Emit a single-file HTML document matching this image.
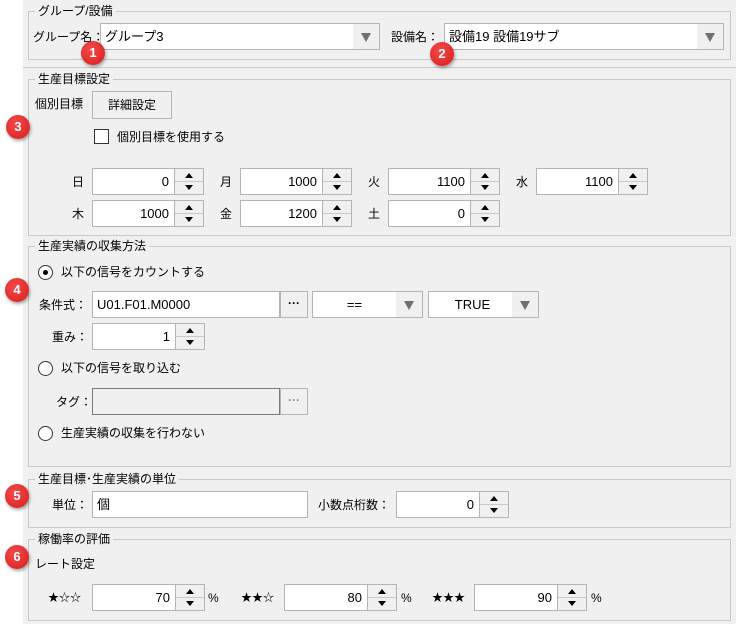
<!DOCTYPE html>
<html><head><meta charset="utf-8"><style>
*{box-sizing:border-box;margin:0;padding:0}
body{width:736px;height:624px;background:#fff;position:relative;overflow:hidden;font-family:"Liberation Sans","Noto Sans CJK JP",sans-serif;font-size:12px;color:#000}
.panel{position:absolute;left:23px;top:0;width:713px;height:624px;background:#f0f0f0}
.a{position:absolute}
.gb{position:absolute;border:1px solid #c8c8c8;left:28px;width:703px}
.gt{position:absolute;left:6px;top:-9px;background:#f0f0f0;padding:0 3px;font-size:12px;line-height:16px}
.tb{position:absolute;background:#fff;border:1px solid #b4b4b4;height:27px;line-height:25px;padding:0 4px;font-size:13px}
.num{text-align:right;padding-right:5px}
.spb{position:absolute;border:1px solid #b4b4b4;border-left:none;width:29px;height:27px;background:#f0f0f0}
.spb:after{content:"";position:absolute;left:0;right:0;top:12px;border-top:1px solid #c8c8c8}
.up,.dn{position:absolute;left:10px;width:0;height:0;border-left:4px solid transparent;border-right:4px solid transparent}
.up{top:4px;border-bottom:5px solid #000}
.dn{top:16px;border-top:5px solid #000}
.cb{position:absolute;background:#fff;border:1px solid #b4b4b4;height:27px;line-height:25px;padding-left:4px;font-size:13px}
.cb .ar{position:absolute;right:0;top:0;width:26px;height:25px;background:#f0f0f0}
.cb .ar:after{content:"";position:absolute;left:8px;top:9px;border-left:5px solid transparent;border-right:5px solid transparent;border-top:9px solid #707070}
.btn{position:absolute;border:1px solid #b4b4b4;background:#f0f0f0;text-align:center}
.badge{position:absolute;width:24px;height:24px;border-radius:50%;background:radial-gradient(circle at 40% 35%,#f24a4a,#d91c1c);color:#fff;font-weight:bold;font-size:13px;text-align:center;line-height:24px;box-shadow:1px 2px 3px rgba(0,0,0,.35)}
.rad{position:absolute;width:15px;height:15px;border:1px solid #333;border-radius:50%;background:#fff}
.l{position:absolute;line-height:16px}
</style></head><body>
<div class="panel"></div>
<div class="a" style="left:23px;top:67px;width:713px;border-top:1px solid #c8c8c8"></div>

<div class="gb" style="top:11px;height:49px"><div class="gt">グループ/設備</div></div>
<div class="l" style="left:33px;top:29px">グループ名：</div>
<div class="cb" style="left:100px;top:23px;width:280px">グループ3<div class="ar"></div></div>
<div class="l" style="left:391px;top:29px">設備名：</div>
<div class="cb" style="left:444px;top:23px;width:280px">設備19 設備19サブ<div class="ar"></div></div>

<div class="gb" style="top:79px;height:157px"><div class="gt">生産目標設定</div></div>
<div class="l" style="left:35px;top:96px">個別目標</div>
<div class="btn" style="left:92px;top:91px;width:80px;height:28px;line-height:26px">詳細設定</div>
<div class="a" style="left:94px;top:129px;width:15px;height:15px;border:1px solid #333;background:#fff"></div>
<div class="l" style="left:117px;top:129px">個別目標を使用する</div>

<div class="l" style="left:72px;top:174px">日</div>
<div class="tb num" style="left:92px;top:168px;width:83px">0</div><div class="spb" style="left:175px;top:168px"><i class="up"></i><i class="dn"></i></div>
<div class="l" style="left:220px;top:174px">月</div>
<div class="tb num" style="left:240px;top:168px;width:83px">1000</div><div class="spb" style="left:323px;top:168px"><i class="up"></i><i class="dn"></i></div>
<div class="l" style="left:368px;top:174px">火</div>
<div class="tb num" style="left:388px;top:168px;width:83px">1100</div><div class="spb" style="left:471px;top:168px"><i class="up"></i><i class="dn"></i></div>
<div class="l" style="left:516px;top:174px">水</div>
<div class="tb num" style="left:536px;top:168px;width:83px">1100</div><div class="spb" style="left:619px;top:168px"><i class="up"></i><i class="dn"></i></div>
<div class="l" style="left:72px;top:206px">木</div>
<div class="tb num" style="left:92px;top:200px;width:83px">1000</div><div class="spb" style="left:175px;top:200px"><i class="up"></i><i class="dn"></i></div>
<div class="l" style="left:220px;top:206px">金</div>
<div class="tb num" style="left:240px;top:200px;width:83px">1200</div><div class="spb" style="left:323px;top:200px"><i class="up"></i><i class="dn"></i></div>
<div class="l" style="left:368px;top:206px">土</div>
<div class="tb num" style="left:388px;top:200px;width:83px">0</div><div class="spb" style="left:471px;top:200px"><i class="up"></i><i class="dn"></i></div>

<div class="gb" style="top:246px;height:221px"><div class="gt">生産実績の収集方法</div></div>
<div class="rad" style="left:38px;top:265px"><div style="position:absolute;left:4px;top:4px;width:5px;height:5px;border-radius:50%;background:#000"></div></div>
<div class="l" style="left:61px;top:264px">以下の信号をカウントする</div>
<div class="l" style="left:39px;top:297px">条件式：</div>
<div class="tb" style="left:92px;top:291px;width:188px">U01.F01.M0000</div>
<div class="btn" style="left:280px;top:291px;width:28px;height:27px;line-height:22px;font-weight:bold">···</div>
<div class="cb" style="left:312px;top:291px;width:111px;text-align:center;padding-right:30px">==<div class="ar"></div></div>
<div class="cb" style="left:428px;top:291px;width:111px;text-align:center;padding-right:26px">TRUE<div class="ar"></div></div>
<div class="l" style="left:52px;top:329px">重み：</div>
<div class="tb num" style="left:92px;top:323px;width:84px">1</div><div class="spb" style="left:176px;top:323px"><i class="up"></i><i class="dn"></i></div>
<div class="rad" style="left:38px;top:361px"></div>
<div class="l" style="left:61px;top:360px">以下の信号を取り込む</div>
<div class="l" style="left:56px;top:394px">タグ：</div>
<div class="tb" style="left:92px;top:388px;width:188px;background:#f0f0f0;border-color:#7a7a7a"></div>
<div class="btn" style="left:280px;top:388px;width:28px;height:27px;line-height:22px;color:#8c8c8c;font-weight:bold">···</div>
<div class="rad" style="left:38px;top:426px"></div>
<div class="l" style="left:61px;top:425px">生産実績の収集を行わない</div>

<div class="gb" style="top:479px;height:49px"><div class="gt">生産目標･生産実績の単位</div></div>
<div class="l" style="left:52px;top:497px">単位：</div>
<div class="tb" style="left:92px;top:491px;width:216px">個</div>
<div class="l" style="left:318px;top:497px">小数点桁数：</div>
<div class="tb num" style="left:396px;top:491px;width:84px">0</div><div class="spb" style="left:480px;top:491px"><i class="up"></i><i class="dn"></i></div>

<div class="gb" style="top:539px;height:82px"><div class="gt">稼働率の評価</div></div>
<div class="l" style="left:35px;top:556px">レート設定</div>
<div class="l" style="left:48px;top:590px;font-size:11px">★☆☆</div>
<div class="tb num" style="left:92px;top:584px;width:84px">70</div><div class="spb" style="left:176px;top:584px"><i class="up"></i><i class="dn"></i></div>
<div class="l" style="left:208px;top:590px">%</div>
<div class="l" style="left:241px;top:590px;font-size:11px">★★☆</div>
<div class="tb num" style="left:284px;top:584px;width:84px">80</div><div class="spb" style="left:368px;top:584px"><i class="up"></i><i class="dn"></i></div>
<div class="l" style="left:401px;top:590px">%</div>
<div class="l" style="left:432px;top:590px;font-size:11px">★★★</div>
<div class="tb num" style="left:474px;top:584px;width:84px">90</div><div class="spb" style="left:558px;top:584px"><i class="up"></i><i class="dn"></i></div>
<div class="l" style="left:591px;top:590px">%</div>

<div class="badge" style="left:81px;top:41px">1</div>
<div class="badge" style="left:430px;top:42px">2</div>
<div class="badge" style="left:6px;top:115px">3</div>
<div class="badge" style="left:5px;top:278px">4</div>
<div class="badge" style="left:5px;top:484px">5</div>
<div class="badge" style="left:5px;top:545px">6</div>
</body></html>
